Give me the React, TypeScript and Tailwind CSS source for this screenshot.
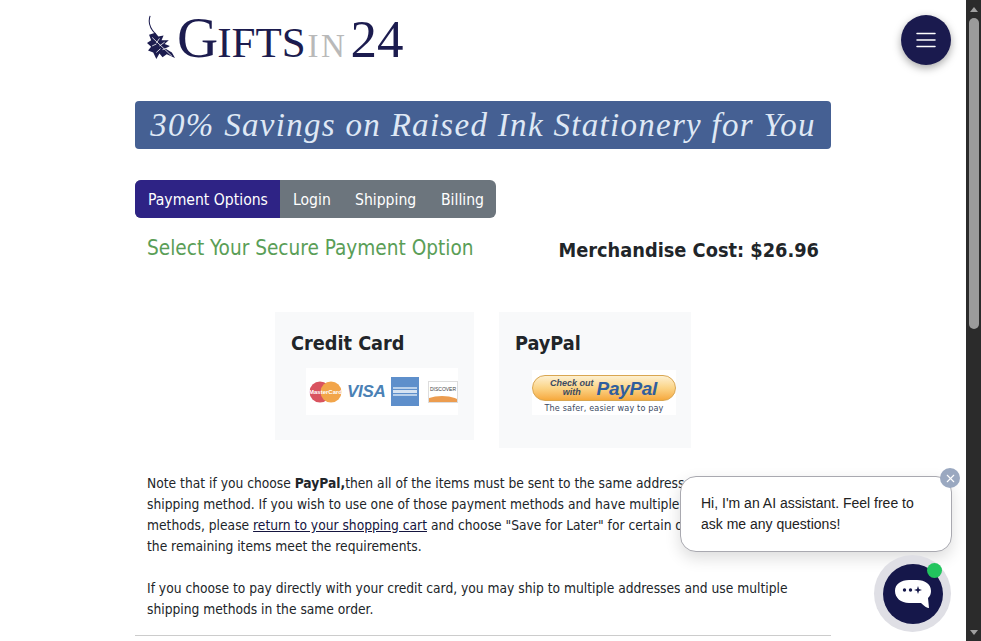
import { X } from "lucide-react";

const tahoma = "font-['DejaVu_Sans',sans-serif] [font-stretch:condensed]";

function Logo() {
  return (
    <div className="flex items-end h-[60px] pl-[12px] font-['Liberation_Serif',serif] text-[#1c1c4f] leading-none">
      <svg width="28" height="44" viewBox="1 0 27 47" preserveAspectRatio="none" className="mb-[1px] shrink-0">
        <path d="M4 1 C2 7 3 13 9 20" fill="none" stroke="#1c1c4f" strokeWidth="1" />
        <path
          d="M3 21 L9 19 L12 23 L17 22 L15 27 L22 27 L18 31 L23 33 L19 36 L25 40 L28 46 L20 42 L16 45 L13 41 L10 47 L7 40 L2 38 L5 34 L1 30 L5 27 Z"
          fill="#1c1c4f"
        />
        <path d="M6 24 L25 44 M10 30 L13 25 M13 33 L18 29 M16 37 L21 35 M10 31 L6 33 M14 36 L10 40" stroke="#fff" strokeWidth="0.8" fill="none" />
      </svg>
      <div className="flex items-baseline mb-[-6px] ml-[2px]">
        <span className="text-[57px] tracking-[-1px]">G</span>
        <span className="text-[43px] tracking-[0px]">IFTS</span>
        <span className="text-[33px] text-[#b9b9b9] ml-[2px] tracking-[2.5px]">IN</span>
        <span className="text-[53px] tracking-[0px] ml-[3px]">24</span>
      </div>
    </div>
  );
}

function CardLogos() {
  return (
    <div className="ml-[15px] mt-[9px] w-[152px] h-[47px] bg-white flex items-center pl-[3px] gap-[5px]">
      <svg width="33" height="22" viewBox="0 0 33 22" className="shrink-0">
        <circle cx="11" cy="11" r="10.5" fill="#d9535f" />
        <circle cx="22" cy="11" r="10.5" fill="#f2a54a" />
        <text x="16.5" y="13" fontSize="6" fontWeight="700" textAnchor="middle" fill="#fff" fontFamily="Liberation Sans, sans-serif">MasterCard</text>
      </svg>
      <span className="font-['Liberation_Sans',sans-serif] italic font-bold text-[17px] leading-none text-[#4a81b5] tracking-[-0.3px] w-[39px]">VISA</span>
      <div className="w-[28px] h-[29px] bg-[#5e8fcb] flex flex-col justify-center items-center gap-[1px] shrink-0">
        <div className="w-[24px] h-[2px] bg-[#b9d0ea]" />
        <div className="w-[24px] h-[3px] bg-[#d6e3f2]" />
        <div className="w-[24px] h-[2px] bg-[#b9d0ea]" />
      </div>
      <div className="ml-[4px] w-[30px] h-[22px] border border-[#ddd] bg-white relative overflow-hidden shrink-0">
        <span className="block text-center text-[5px] mt-[5px] leading-none text-[#444] font-['Liberation_Sans',sans-serif]">DISCOVER</span>
        <div className="absolute right-[-3px] bottom-[-7px] w-[36px] h-[13px] bg-[#ec9c4f] rounded-[50%]" />
      </div>
    </div>
  );
}

function PaypalButton() {
  return (
    <div className="ml-[17px] mt-[11px] w-[144px] h-[45px] pt-[5px] bg-white font-['Liberation_Sans',sans-serif]">
      <div className="h-[26px] rounded-[13px] border border-[#d9a651] bg-gradient-to-b from-[#fdf0d0] via-[#fbd486] to-[#f6a93b] flex items-center pl-[17px] gap-[3px]">
        <span className="text-[9px] leading-[9px] font-bold italic text-[#3d4a60] text-center">
          Check out
          <br />
          with
        </span>
        <span className="text-[19px] leading-none font-bold italic text-[#2f5e9e] tracking-[-0.3px]">PayPal</span>
      </div>
      <div className={`text-[9px] leading-[14px] text-center text-[#3b4a63] tracking-[0.15px] ${tahoma}`}>The safer, easier way to pay</div>
    </div>
  );
}

function Scrollbar() {
  return (
    <div className="w-[15px] shrink-0 h-full bg-[#2b2b2b] flex flex-col items-center">
      <div className="h-[18px] flex items-center justify-center">
        <div className="w-0 h-0 border-x-[4px] border-x-transparent border-b-[5px] border-b-[#a0a0a0]" />
      </div>
      <div className="w-[10px] h-[311px] bg-[#9b9b9b] rounded-[5px]" />
      <div className="flex-1" />
      <div className="h-[18px] flex items-center justify-center">
        <div className="w-0 h-0 border-x-[4px] border-x-transparent border-t-[5px] border-t-[#a0a0a0]" />
      </div>
    </div>
  );
}

export default function App() {
  return (
    <div className="relative flex h-[641px] overflow-hidden bg-white">
      <div className={`relative flex-1 min-w-0 overflow-hidden text-[#212529] ${tahoma}`}>
        <div className="ml-[135px] w-[696px]">
          <Logo />

          <div className="mt-[41px] h-[48px] rounded-[4px] bg-[#456093] flex items-center justify-center font-['Liberation_Serif',serif] italic text-[#dfe8f5] text-[33px] leading-none tracking-[1.3px] whitespace-nowrap">
            30% Savings on Raised Ink Stationery for You
          </div>

          <div className="mt-[31px] flex w-[361px] h-[38px] rounded-[6px] overflow-hidden bg-[#6c757d] text-white text-[15.6px] leading-[40px] whitespace-nowrap">
            <div className="w-[145px] pl-[13px] bg-[#2e2385]">Payment Options</div>
            <div className="w-[62px] pl-[13px]">Login</div>
            <div className="w-[86px] pl-[13px]">Shipping</div>
            <div className="pl-[13px]">Billing</div>
          </div>

          <div className="flex justify-between items-start pl-[12px] pr-[12px] mt-[15px] whitespace-nowrap">
            <h3 className="text-[20.6px] leading-[30px] text-[#5a9e57]">Select Your Secure Payment Option</h3>
            <h4 className="text-[19.8px] leading-[30px] font-bold mt-[3px]">Merchandise Cost: $26.96</h4>
          </div>

          <div className="flex items-start ml-[140px] mt-[46px] gap-[25px]">
            <div className="w-[199px] h-[128px] bg-[#f8f9fa] pl-[16px] pt-[17px]">
              <div className="text-[19.7px] leading-[30px] font-bold">Credit Card</div>
              <CardLogos />
            </div>
            <div className="w-[192px] h-[136px] bg-[#f8f9fa] pl-[16px] pt-[17px]">
              <div className="text-[19.7px] leading-[30px] font-bold">PayPal</div>
              <PaypalButton />
            </div>
          </div>

          <div className="mt-[25px] pl-[12px] text-[13.7px] leading-[21px] whitespace-nowrap">
            <p>
              Note that if you choose <b>PayPal,</b>then all of the items must be sent to the same address and use the same
              <br />
              shipping method. If you wish to use one of those payment methods and have multiple addresses or
              <br />
              methods, please{" "}
              <a className="underline text-[#15153f]">return to your shopping cart</a> and choose "Save for Later" for certain of your items so
              <br />
              the remaining items meet the requirements.
            </p>
            <p className="mt-[21px]">
              If you choose to pay directly with your credit card, you may ship to multiple addresses and use multiple
              <br />
              shipping methods in the same order.
            </p>
          </div>

          <div className="mt-[15px] h-px bg-[#cccccc]" />
        </div>

        <button className="absolute left-[901px] top-[15px] w-[50px] h-[50px] rounded-full bg-[#1a1a4e] text-white flex items-center justify-center shadow-[0_3px_8px_rgba(0,0,0,0.35)]">
          <svg width="20" height="16" viewBox="0 0 20 16" fill="none" stroke="#fff" strokeWidth="1.5" strokeLinecap="round">
            <path d="M1 1.5 H19 M1 8 H19 M1 14.5 H19" />
          </svg>
        </button>

        <div className="absolute left-[680px] top-[476px] w-[272px] h-[76px] rounded-[16px] border border-[#a9a9b0] bg-white shadow-[0_6px_16px_rgba(0,0,0,0.14)] pl-[20px] pt-[16px] font-['Liberation_Sans',sans-serif] text-[14px] leading-[21px] text-[#222] [font-stretch:normal]">
          Hi, I'm an AI assistant. Feel free to
          <br />
          ask me any questions!
        </div>
        <div className="absolute left-[940px] top-[468px] w-[20px] h-[20px] rounded-full bg-[#9aa8c0] text-white flex items-center justify-center">
          <X size={13} strokeWidth={2} />
        </div>

        <div className="absolute left-[874px] top-[555px] w-[77px] h-[77px] rounded-full bg-[#dfdfe5] flex items-center justify-center">
          <div className="w-[60px] h-[60px] rounded-full bg-[#15174a] flex items-center justify-center">
            <svg width="38" height="30" viewBox="0 0 38 30">
              <path d="M15 1 H23 C31 1 37 5 37 12 C37 15 36 17 34 19 L35 29 C33 29 30 27 27 24 C25 24 24 24 22 24 H15 C7 24 1 19 1 12 C1 5 7 1 15 1 Z" fill="#fff" />
              <circle cx="10.5" cy="11" r="1.7" fill="#15174a" />
              <circle cx="16.5" cy="11" r="1.7" fill="#15174a" />
              <path d="M24 7 L25 10 L28 11 L25 12 L24 15 L23 12 L20 11 L23 10 Z" fill="#15174a" />
            </svg>
          </div>
        </div>
        <div className="absolute left-[927px] top-[563px] w-[15px] h-[15px] rounded-full bg-[#22c55e]" />
      </div>
      <Scrollbar />
    </div>
  );
}
